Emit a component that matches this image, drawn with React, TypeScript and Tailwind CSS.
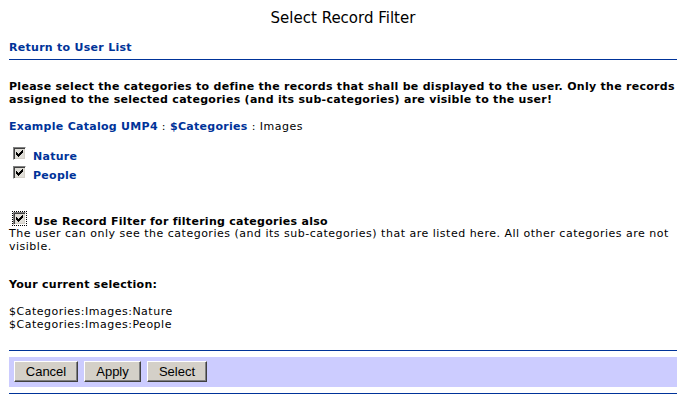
export default function App() {
  return (
    <div className="w-[686px] h-[401px] bg-white px-[9px] font-['DejaVu_Sans',sans-serif] text-[11px] leading-[13px] tracking-[0.5px] text-black overflow-hidden">
      <h1 className="text-center text-[15px] leading-[18px] pt-[9px] tracking-normal">Select Record Filter</h1>
      <a className="block mt-[14px] font-bold tracking-[0.28px] text-[#003399] w-fit">Return to User List</a>
      <div className="mt-[5px] border-t border-[#003399]" />

      <p className="mt-[20px] font-bold tracking-[0.28px]">
        Please select the categories to define the records that shall be displayed to the user. Only the records
        assigned to the selected categories (and its sub-categories) are visible to the user!
      </p>

      <div className="mt-[14px]">
        <span className="font-bold tracking-[0.28px] text-[#003399]">Example Catalog UMP4</span> :{" "}
        <span className="font-bold tracking-[0.28px] text-[#003399]">$Categories</span> : Images
      </div>

      <div className="mt-[14px] flex flex-col">
        {["Nature", "People"].map((c) => (
          <label key={c} className="flex items-start h-[19px] pl-[4px]">
            <Check />
            <span className="ml-[7px] mt-[3px] font-bold tracking-[0.28px] text-[#003399]">{c}</span>
          </label>
        ))}
      </div>

      <label className="mt-[27px] flex items-start h-[15px] pl-[4px]">
        <Check focus />
        <span className="ml-[8px] mt-[3px] font-bold tracking-[0.28px]">Use Record Filter for filtering categories also</span>
      </label>
      <p>
        The user can only see the categories (and its sub-categories) that are listed here. All other categories are not
        visible.
      </p>

      <p className="mt-[25px] font-bold tracking-[0.28px]">Your current selection:</p>
      <div className="mt-[14px]">
        <div>$Categories:Images:Nature</div>
        <div>$Categories:Images:People</div>
      </div>

      <div className="mt-[19px] border-t border-[#003399]" />
      <div className="mt-[6px] bg-[#ccccff] h-[30px] flex items-start gap-[6px] pl-[5px] pt-[4px] tracking-normal">
        <Btn w="w-[64px]">Cancel</Btn>
        <Btn w="w-[57px]">Apply</Btn>
        <Btn w="w-[60px]">Select</Btn>
      </div>
      <div className="mt-[6px] border-t border-[#003399]" />
    </div>
  );
}

// classic 7x7 check mark, one 1x3 column per x
const checkCols = [2, 3, 4, 3, 2, 1, 0];

function Check({ focus }: { focus?: boolean }) {
  return (
    <span className={focus ? "outline-1 outline-dotted outline-black outline-offset-0" : ""}>
      <span className="block w-[13px] h-[13px] bg-[#e0ded8] border border-t-[#808080] border-l-[#808080] border-b-white border-r-white shadow-[inset_1px_1px_0_#404040,inset_-1px_-1px_0_#d4d0c8]">
        <svg viewBox="0 0 11 11" className="w-[11px] h-[11px]" shapeRendering="crispEdges">
          {checkCols.map((y, x) => (
            <rect key={x} x={2 + x} y={2 + y} width={1} height={3} fill="black" />
          ))}
        </svg>
      </span>
    </span>
  );
}

function Btn({ w, children }: { w: string; children: React.ReactNode }) {
  return (
    <button
      className={`${w} h-[21px] bg-[#d4d0c8] border border-t-white border-l-white border-b-[#404040] border-r-[#404040] shadow-[inset_-1px_-1px_0_#808080] font-['Liberation_Sans',sans-serif] text-[13px] leading-[17px] text-black`}
    >
      {children}
    </button>
  );
}
